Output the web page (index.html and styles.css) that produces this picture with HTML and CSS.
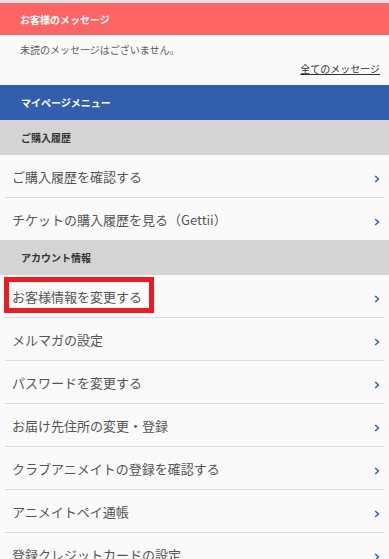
FILE: index.html
```html
<!DOCTYPE html>
<html lang="ja">
<head>
<meta charset="utf-8">
<title>マイページ</title>
<link rel="stylesheet" href="styles.css">
</head>
<body>
<div class="page">
  <section class="messages">
    <h2 class="msg-head">お客様のメッセージ</h2>
    <div class="msg-body">
      <p class="msg-text">未読のメッセージはございません。</p>
      <p class="msg-link-wrap"><a class="msg-link" href="#">全てのメッセージ</a></p>
    </div>
  </section>
  <nav class="menu">
    <h2 class="menu-head">マイページメニュー</h2>
    <h3 class="sec">ご購入履歴</h3>
    <ul class="list">
      <li class="row"><span class="label">ご購入履歴を確認する</span><svg class="chev" viewBox="0 0 6 8" width="6" height="8"><path d="M1.2 1 L4.4 4 L1.2 7" fill="none" stroke="#3a64b4" stroke-width="1.6"/></svg></li>
      <li class="row"><span class="label">チケットの購入履歴を見る（Gettii）</span><svg class="chev" viewBox="0 0 6 8" width="6" height="8"><path d="M1.2 1 L4.4 4 L1.2 7" fill="none" stroke="#3a64b4" stroke-width="1.6"/></svg></li>
    </ul>
    <h3 class="sec">アカウント情報</h3>
    <ul class="list">
      <li class="row"><span class="label">お客様情報を変更する</span><svg class="chev" viewBox="0 0 6 8" width="6" height="8"><path d="M1.2 1 L4.4 4 L1.2 7" fill="none" stroke="#3a64b4" stroke-width="1.6"/></svg><span class="highlight"></span></li>
      <li class="row"><span class="label">メルマガの設定</span><svg class="chev" viewBox="0 0 6 8" width="6" height="8"><path d="M1.2 1 L4.4 4 L1.2 7" fill="none" stroke="#3a64b4" stroke-width="1.6"/></svg></li>
      <li class="row"><span class="label">パスワードを変更する</span><svg class="chev" viewBox="0 0 6 8" width="6" height="8"><path d="M1.2 1 L4.4 4 L1.2 7" fill="none" stroke="#3a64b4" stroke-width="1.6"/></svg></li>
      <li class="row"><span class="label">お届け先住所の変更・登録</span><svg class="chev" viewBox="0 0 6 8" width="6" height="8"><path d="M1.2 1 L4.4 4 L1.2 7" fill="none" stroke="#3a64b4" stroke-width="1.6"/></svg></li>
      <li class="row"><span class="label">クラブアニメイトの登録を確認する</span><svg class="chev" viewBox="0 0 6 8" width="6" height="8"><path d="M1.2 1 L4.4 4 L1.2 7" fill="none" stroke="#3a64b4" stroke-width="1.6"/></svg></li>
      <li class="row"><span class="label">アニメイトペイ通帳</span><svg class="chev" viewBox="0 0 6 8" width="6" height="8"><path d="M1.2 1 L4.4 4 L1.2 7" fill="none" stroke="#3a64b4" stroke-width="1.6"/></svg></li>
      <li class="row"><span class="label">登録クレジットカードの設定</span><svg class="chev" viewBox="0 0 6 8" width="6" height="8"><path d="M1.2 1 L4.4 4 L1.2 7" fill="none" stroke="#3a64b4" stroke-width="1.6"/></svg></li>
    </ul>
  </nav>
</div>
</body>
</html>
```
FILE: styles.css
```css
html, body {
  margin: 0;
  padding: 0;
}
body {
  background: #fafafa;
  font-family: "Noto Sans CJK JP", "Noto Sans", sans-serif;
  color: #444;
}
.page {
  border-top: 3px solid #e2e2e2;
}
.msg-head {
  margin: 0;
  height: 32px;
  display: flex;
  align-items: center;
  padding-left: 20px;
  background: #ff6565;
  color: #fff;
  font-size: 10px;
  font-weight: bold;
}
.msg-body {
  padding: 8px 9px 9px 20px;
  font-size: 10px;
  line-height: 14px;
  color: #5a5a5a;
}
.msg-text {
  margin: 0;
}
.msg-link-wrap {
  margin: 5px 0 0;
  text-align: right;
}
.msg-link {
  color: #333;
  text-decoration: underline;
}
.menu-head {
  margin: 0;
  height: 35px;
  display: flex;
  align-items: center;
  padding-left: 21px;
  background: #315fad;
  color: #fff;
  font-size: 10px;
  font-weight: bold;
}
.sec {
  margin: 0;
  height: 35px;
  display: flex;
  align-items: center;
  padding-left: 21px;
  background: #d4d4d4;
  color: #333;
  font-size: 10px;
  font-weight: bold;
}
.list {
  list-style: none;
  margin: 0;
  padding: 0;
}
.row {
  position: relative;
  margin: 0 5px;
  height: 42px;
  border-bottom: 1px solid #dcdcdc;
  display: flex;
  align-items: center;
  justify-content: space-between;
  padding: 0 4px 0 7px;
  font-size: 13px;
  color: #555;
}
.row:last-child {
  border-bottom: none;
}
.chev {
  margin-top: 5px;
}
.highlight {
  position: absolute;
  left: -1px;
  top: 2px;
  width: 150px;
  height: 36px;
  box-sizing: border-box;
  border: 5px solid #ed1c24;
}
```
